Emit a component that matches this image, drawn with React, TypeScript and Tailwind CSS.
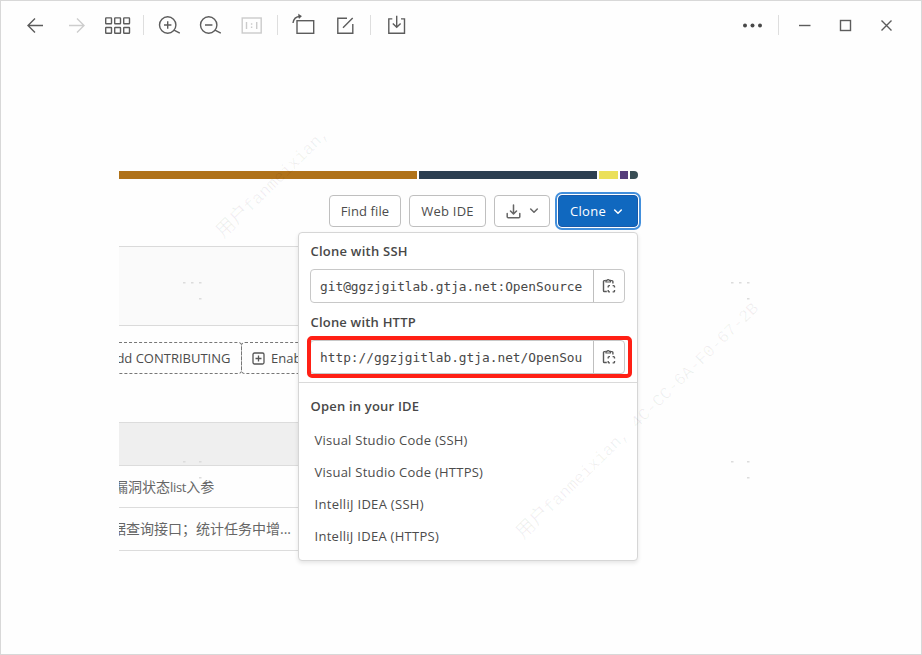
import type { ReactNode } from "react";

const mono = "font-['DejaVu_Sans_Mono','Liberation_Mono',monospace]";

function Tool({ children, className = "", wide = false, color = "#5c5c5c" }: { children: ReactNode; className?: string; wide?: boolean; color?: string }) {
  return (
    <button className={`h-6 shrink-0 ${wide ? "w-7" : "w-6"} ${className}`}>
      <svg width={wide ? 28 : 24} height="24" viewBox={wide ? "0 0 28 24" : "0 0 24 24"} fill="none" stroke={color} strokeWidth="1.4" className="block">
        {children}
      </svg>
    </button>
  );
}

function Divider({ className = "" }: { className?: string }) {
  return <span className={`h-5 w-px shrink-0 bg-[#dedede] ${className}`} />;
}

function Toolbar() {
  return (
    <header className="flex h-[48px] items-center pl-[22px]">
      <Tool><path d="M20 12.5H5M12 5.5l-7 7 7 7" /></Tool>
      <Tool className="ml-[18px]" color="#cdcdcd"><path d="M4 12.5h15M12 5.5l7 7-7 7" /></Tool>
      <Tool wide className="ml-[15px]">
        {[1.7, 10.7, 19.7].map((x) => [4.9, 14.5].map((y) => <rect key={`${x}-${y}`} x={x} y={y} width="5.8" height="5.8" rx=".5" />))}
      </Tool>
      <Divider className="ml-[11px]" />
      <Tool className="ml-[13px]"><circle cx="10.7" cy="12" r="8.2" /><path d="M17 17.2l5.8 3M7 12h7.4M10.7 8.3v7.4" /></Tool>
      <Tool className="ml-[17px]"><circle cx="10.7" cy="12" r="8.2" /><path d="M17 17.2l5.8 3M7 12h7.4" /></Tool>
      <Tool className="ml-[18px]" color="#cbcbcb"><rect x="2.2" y="5" width="19" height="15" /><path d="M6.5 9v7M16.7 9v7M11.6 10.3v1.4M11.6 13.5v1.4" /></Tool>
      <Divider className="ml-[13px]" />
      <Tool className="ml-[13px]">
        <rect x="6" y="7.7" width="16.7" height="12.6" />
        <path d="M2 10C2.5 6 5 3.5 9.3 3.2" /><path d="M7.5 1.2l3 2-2.5 2.2z" fill="#505050" strokeWidth=".6" />
      </Tool>
      <Tool className="ml-[18px]"><path d="M14 5.3H4.8v15h15V11M10 14.8L19.7 5" /></Tool>
      <Divider className="ml-[13px]" />
      <Tool className="ml-[13px]"><path d="M8.3 5.9H4.8v14.4h15.7V5.9H17M12.7 2.8v11.4M8.8 10.5l3.9 3.8 3.9-3.8" /></Tool>
      <Tool className="ml-[333px]"><g fill="#484848" stroke="none"><circle cx="4" cy="12.5" r="2" /><circle cx="11.5" cy="12.5" r="2" /><circle cx="19" cy="12.5" r="2" /></g></Tool>
      <Divider className="ml-[13px]" />
      <Tool className="ml-[14px]"><path d="M6 12.5h11.5" /></Tool>
      <Tool className="ml-[17px]"><rect x="6.5" y="7.5" width="10" height="10" /></Tool>
      <Tool className="ml-[17px]"><path d="M6.5 7.5l10 10M16.5 7.5l-10 10" /></Tool>
    </header>
  );
}

function Chevron() {
  return <svg width="10" height="6" viewBox="0 0 10 6" fill="none" stroke="currentColor" strokeWidth="1.5" strokeLinecap="round" strokeLinejoin="round"><path d="M1.7 1l3.3 3.3L8.3 1" /></svg>;
}

function CopyButton() {
  return (
    <button className="flex h-full w-[31px] items-center justify-center rounded-r-[4px] border-l border-[#bfbfbf]">
      <svg width="14" height="18" viewBox="0 0 14 18" fill="none" stroke="#585858" strokeWidth="1.4">
        <path d="M4.8 14.5H2.3a.8.8 0 0 1-.8-.8V4.5c0-.5.3-.9.8-.9h1.4M8.6 3.6H10c.5 0 .9.4.9.9v2" />
        <path d="M4 5V3.4h1a1.2 1.2 0 0 1 2.3 0h1.1V5z" strokeWidth="1.2" />
        <path d="M6.2 10.4v-1c0-.5.3-.8.8-.8h1M10.6 8.6h1c.5 0 .9.3.9.8v1M12.5 13v1c0 .5-.4.9-.9.9h-1M8 14.9H7c-.5 0-.8-.4-.8-.9v-1" />
      </svg>
    </button>
  );
}

function CloneField({ value, className = "" }: { value: string; className?: string }) {
  return (
    <div className={`flex h-[34px] w-[315px] rounded-[4px] border border-[#c8c8c8] bg-white ${className}`}>
      <div className="min-w-0 flex-1 pl-[9px] pr-[10px] pt-px">
        <div className={`overflow-hidden whitespace-nowrap text-[12.82px] font-normal leading-[31px] text-[#484848] ${mono}`}>{value}</div>
      </div>
      <CopyButton />
    </div>
  );
}

const ides = [
  { name: "Visual Studio Code (SSH)", spacing: "tracking-[0.24px]" },
  { name: "Visual Studio Code (HTTPS)", spacing: "tracking-[0.24px]" },
  { name: "IntelliJ IDEA (SSH)", spacing: "tracking-[0.3px]" },
  { name: "IntelliJ IDEA (HTTPS)", spacing: "tracking-[0.28px]" },
];

function CloneMenu() {
  return (
    <div className="absolute left-[179px] top-[61px] h-[329px] w-[340px] rounded-[4px] border border-[#d6d6d6] bg-white shadow-[0_2px_4px_rgba(0,0,0,0.1)]">
      <div className="flex h-[150px] flex-col border-b border-[#dadada] pl-[11px]">
        <h3 className="mt-2 h-5 pl-[0.5px] text-[13px] font-semibold leading-5 tracking-[0.24px] text-[#484848]">Clone with SSH</h3>
        <CloneField className="mt-2" value="git@ggzjgitlab.gtja.net:OpenSource" />
        <h3 className="mt-[9px] h-5 pl-[0.5px] text-[13px] font-semibold leading-5 tracking-[0.2px] text-[#484848]">Clone with HTTP</h3>
        <div className="relative mt-2">
          <CloneField value="http://ggzjgitlab.gtja.net/OpenSou" />
          <span className="pointer-events-none absolute -left-[3px] -top-[4px] h-[42px] w-[325px] rounded-[5px] border-4 border-[#ff2015]" />
        </div>
      </div>
      <h3 className="mt-[13px] h-5 pl-[11.5px] text-[13px] font-semibold leading-5 tracking-[0.2px] text-[#484848]">Open in your IDE</h3>
      <ul className="mt-2 pl-[15.5px] text-[13px] text-[#4c4c4c]">
        {ides.map((ide) => <li key={ide.name} className={`h-8 whitespace-nowrap leading-8 ${ide.spacing}`}>{ide.name}</li>)}
      </ul>
    </div>
  );
}

function Dots({ className, points }: { className: string; points: number[][] }) {
  return (
    <svg className={`pointer-events-none absolute ${className}`} width="20" height="20" fill="#dcdcdc">
      {points.map(([x, y]) => <rect key={`${x}-${y}`} x={x} y={y} width="2.5" height="1.5" />)}
    </svg>
  );
}

function Watermark({ text, className }: { text: string; className: string }) {
  return (
    <div className={`pointer-events-none absolute origin-left -rotate-[44.3deg] whitespace-nowrap font-['Liberation_Mono','Noto_Sans_CJK_SC',monospace] text-[16.8px] leading-6 text-black/[0.06] ${className}`}>
      <span className="text-[19px]">用户</span>{text}
    </div>
  );
}

export default function App() {
  return (
    <div className="relative h-[655px] w-[922px] overflow-hidden border border-[#d8d8d8] bg-[#fefefe] font-['Open_Sans','Noto_Sans_CJK_SC',sans-serif] text-[#4c4c4c]">
      <Toolbar />
      <main className="relative ml-[118px] mt-[122px] h-[392px] w-[519px]">
        <div className="flex h-2 gap-[2px] overflow-hidden rounded-r-full">
          <span className="w-[298px] bg-[#b07219]" />
          <span className="w-[178px] bg-[#2c3e50]" />
          <span className="w-[19px] bg-[#ebe05a]" />
          <span className="w-[8px] bg-[#563d7c]" />
          <span className="w-[8px] bg-[#384d54]" />
        </div>
        <div className="mt-4 flex h-8 justify-end gap-2 text-[13px]">
          <button className="w-[72px] rounded-[4px] border border-[#bfbfbf] bg-white pt-px tracking-[0.1px]">Find file</button>
          <button className="w-[77px] rounded-[4px] border border-[#bfbfbf] bg-white pt-px tracking-[0.25px]">Web IDE</button>
          <button className="flex w-[56px] items-center justify-center gap-2 rounded-[4px] border border-[#bfbfbf] bg-white text-[#666]">
            <svg width="15" height="15" viewBox="0 0 15 15" fill="none" stroke="currentColor" strokeWidth="1.5" strokeLinecap="round" strokeLinejoin="round"><path d="M1.2 9.5v3.2c0 .8.3 1 1 1h10.6c.7 0 1-.2 1-1V9.5M7.5 1v8.5M4.5 7l3 3 3-3" /></svg>
            <Chevron />
          </button>
          <button className="flex w-[80px] items-center justify-center gap-[7px] rounded-[4px] border border-[#1a5aa8] bg-[#1068bf] pt-px pr-[3px] font-medium tracking-[0.3px] text-white shadow-[0_0_0_1px_#fff,0_0_0_3px_#428fdc]">
            Clone<Chevron />
          </button>
        </div>
        <div className="mt-[19px] h-[80px] border-y border-[#dadada] bg-[#fafafa]" />
        <div className="mt-4 flex h-8 w-[179px] overflow-hidden whitespace-nowrap text-[13px] leading-[30px]">
          <div className="flex w-[123px] shrink-0 justify-end overflow-hidden rounded-r-[4px] border border-l-0 border-dashed border-[#777] pr-[10.5px]">Add CONTRIBUTING</div>
          <div className="-ml-px flex w-[120px] shrink-0 items-center rounded-[4px] border border-dashed border-[#777] pl-[10px]">
            <svg width="13" height="13" viewBox="0 0 13 13" fill="none" stroke="#555" strokeWidth="1.3" className="mr-[6px] shrink-0"><rect x="1" y="1" width="11" height="11" rx="1.5" /><path d="M6.5 3.5v6M3.5 6.5h6" /></svg>
            Enable Auto DevOps
          </div>
        </div>
        <div className="mt-12 w-[179px] whitespace-nowrap text-[14px] text-[#666]">
          <div className="h-11 border-y border-[#dcdcdc] bg-[#efefef]" />
          <div className="flex h-[42px] overflow-hidden border-b border-[#dcdcdc] leading-[41px]"><span className="-ml-[5px]">漏洞状态<span className="text-[13px] tracking-[-0.3px]">list</span>入参</span></div>
          <div className="flex h-[43px] overflow-hidden border-b border-[#dcdcdc] leading-[42px]"><span className="-ml-[7px]">据查询接口；统计任务中增...</span></div>
        </div>
        <CloneMenu />
      </main>
      <Watermark className="left-[219px] top-[222px]" text="fanmeixian," />
      <Watermark className="left-[519px] top-[523px]" text="fanmeixian, 4C-CC-6A-F0-67-2B" />
      <Dots className="left-[182px] top-[281px]" points={[[0, 0], [8, 0], [16, 0], [16, 16]]} />
      <Dots className="left-[730px] top-[281px]" points={[[0, 0], [8, 0], [16, 0], [16, 16]]} />
      <Dots className="left-[182px] top-[460px]" points={[[0, 0], [16, 0], [16, 16]]} />
      <Dots className="left-[730px] top-[460px]" points={[[0, 0], [16, 0], [16, 16]]} />
    </div>
  );
}
